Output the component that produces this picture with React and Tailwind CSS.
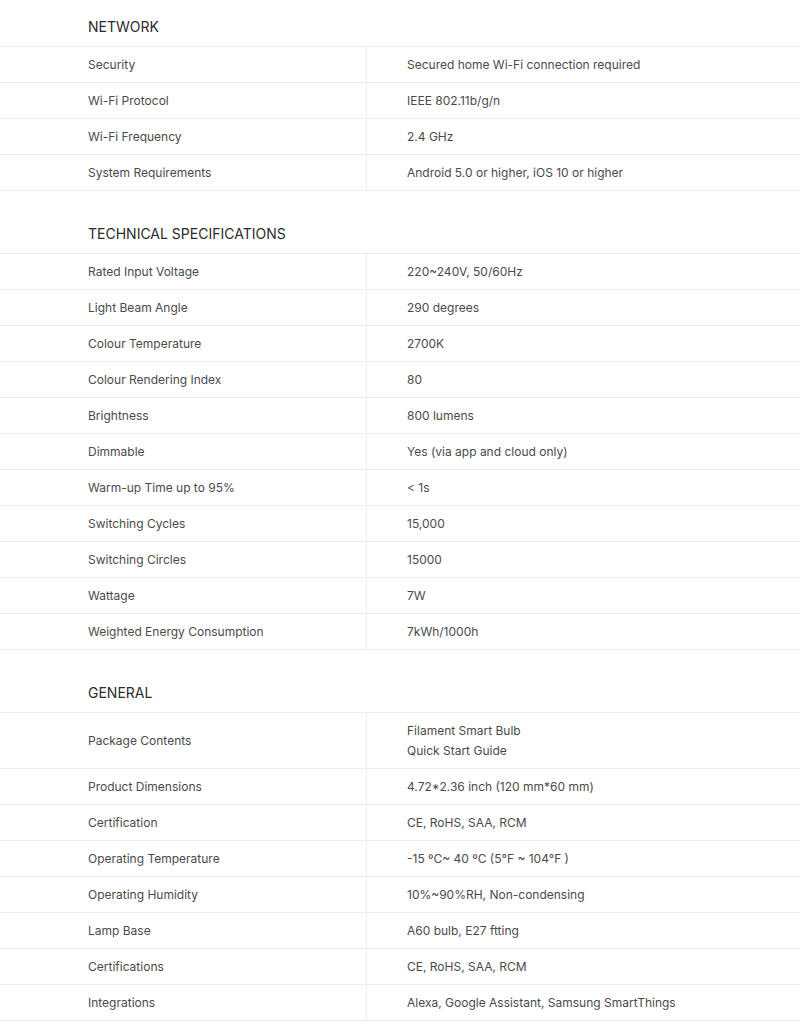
import React from 'react';

const sections = [
  {
    title: 'NETWORK',
    rows: [
      ['Security', 'Secured home Wi-Fi connection required'],
      ['Wi-Fi Protocol', 'IEEE 802.11b/g/n'],
      ['Wi-Fi Frequency', '2.4 GHz'],
      ['System Requirements', 'Android 5.0 or higher, iOS 10 or higher'],
    ],
  },
  {
    title: 'TECHNICAL SPECIFICATIONS',
    rows: [
      ['Rated Input Voltage', '220~240V, 50/60Hz'],
      ['Light Beam Angle', '290 degrees'],
      ['Colour Temperature', '2700K'],
      ['Colour Rendering Index', '80'],
      ['Brightness', '800 lumens'],
      ['Dimmable', 'Yes (via app and cloud only)'],
      ['Warm-up Time up to 95%', '< 1s'],
      ['Switching Cycles', '15,000'],
      ['Switching Circles', '15000'],
      ['Wattage', '7W'],
      ['Weighted Energy Consumption', '7kWh/1000h'],
    ],
  },
  {
    title: 'GENERAL',
    rows: [
      ['Package Contents', ['Filament Smart Bulb', 'Quick Start Guide']],
      ['Product Dimensions', '4.72*2.36 inch (120 mm*60 mm)'],
      ['Certification', 'CE, RoHS, SAA, RCM'],
      ['Operating Temperature', '-15 ºC~ 40 ºC (5°F ~ 104°F )'],
      ['Operating Humidity', '10%~90%RH, Non-condensing'],
      ['Lamp Base', 'A60 bulb, E27 ftting'],
      ['Certifications', 'CE, RoHS, SAA, RCM'],
      ['Integrations', 'Alexa, Google Assistant, Samsung SmartThings'],
    ],
  },
];

const SpecRow = ({ label, value }) => {
  const lines = Array.isArray(value) ? value : [value];
  return (
    <div className="flex border-b border-[#ececec]">
      <div className="w-[367px] shrink-0 border-r border-[#ececec] pl-[88px] flex items-center pt-[8px] pb-[7px] leading-[20px]">
        {label}
      </div>
      <div className="flex-1 pl-[40px] pt-[8px] pb-[7px] leading-[20px] flex flex-col justify-center">
        {lines.map((line) => (
          <span key={line}>{line}</span>
        ))}
      </div>
    </div>
  );
};

export default function App() {
  return (
    <div
      className="w-[800px] min-h-[1033px] bg-white text-[12px] text-[#4a4a4a]"
      style={{ fontFamily: 'Inter, "Noto Sans", sans-serif' }}
    >
      {sections.map((section, i) => (
        <div key={section.title} className={i === 0 ? '' : 'mt-[16px]'}>
          {/* Section heading */}
          <h2 className="pl-[88px] pt-[17px] pb-[9px] text-[14px] leading-[20px] text-[#2b2b2b] border-b border-[#ececec]">
            {section.title}
          </h2>
          {section.rows.map(([label, value]) => (
            <SpecRow key={label} label={label} value={value} />
          ))}
        </div>
      ))}
    </div>
  );
}
